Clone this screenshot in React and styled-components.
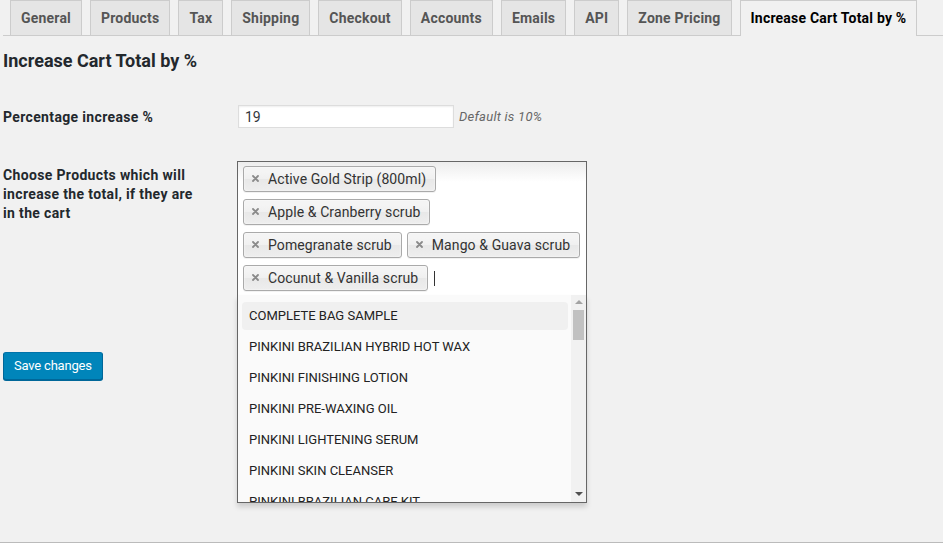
import React from "react";
import styled, { createGlobalStyle } from "styled-components";

const GlobalStyle = createGlobalStyle`
  html, body { margin: 0; padding: 0; }
  body {
    background: #f1f1f1;
    font-family: Roboto, "Liberation Sans", Arial, sans-serif;
    color: #23282d;
    font-size: 13px;
  }
  * { box-sizing: border-box; }
`;

const Page = styled.div`
  min-height: 100vh;
  display: flex;
  flex-direction: column;
`;

const Wrap = styled.div`
  flex: 1;
  padding-left: 3px;
`;

const TabBar = styled.nav`
  display: flex;
  align-items: flex-end;
  gap: 8px;
  padding-left: 7px;
  border-bottom: 1px solid #ccc;
`;

const Tab = styled.a`
  display: block;
  padding: 5px 10px;
  line-height: 24px;
  font-size: 14px;
  font-weight: 700;
  letter-spacing: 0.2px;
  white-space: nowrap;
  border: 1px solid #ccc;
  border-bottom: none;
  background: ${(p) => (p.$active ? "#f1f1f1" : "#e5e5e5")};
  color: ${(p) => (p.$active ? "#000" : "#555")};
  margin-bottom: ${(p) => (p.$active ? "-1px" : "0")};
  padding-bottom: ${(p) => (p.$active ? "6px" : "5px")};
  text-decoration: none;
`;

const Title = styled.h2`
  margin: 13px 0 0;
  font-size: 18px;
  line-height: 23px;
  font-weight: 700;
  color: #23282d;
`;

const FormTable = styled.div`
  display: flex;
  flex-direction: column;
  gap: 33px;
  margin-top: 33px;
`;

const FieldRow = styled.div`
  display: grid;
  grid-template-columns: 235px 1fr;
  align-items: ${(p) => (p.$top ? "start" : "center")};
`;

const Label = styled.label`
  width: 204px;
  font-size: 14px;
  font-weight: 700;
  letter-spacing: 0.35px;
  line-height: 19px;
  color: #23282d;
  padding-top: ${(p) => (p.$top ? "5px" : "1px")};
`;

const InputLine = styled.div`
  display: flex;
  align-items: center;
`;

const TextInput = styled.input`
  width: 216px;
  height: 23px;
  padding: 0 6px;
  border: 1px solid #ddd;
  box-shadow: inset 0 1px 2px rgba(0, 0, 0, 0.07);
  background: #fff;
  font-family: inherit;
  font-size: 14px;
  color: #32373c;
  outline: none;
`;

const Description = styled.span`
  margin-left: 5px;
  font-size: 13px;
  font-style: italic;
  letter-spacing: 0.25px;
  color: #666;
`;

const Select = styled.div`
  position: relative;
  width: 350px;
  margin-left: -1px;
`;

const Choices = styled.div`
  display: flex;
  flex-wrap: wrap;
  align-items: center;
  gap: 7px 5px;
  padding: 4px 5px 4px;
  border: 1px solid #666;
  border-bottom: none;
  background: linear-gradient(#eee 1%, #fff 15%);
`;

const Chip = styled.span`
  display: inline-flex;
  align-items: center;
  height: 26px;
  padding: 0 9px 1px 8px;
  border: 1px solid #aaa;
  border-radius: 3px;
  background: linear-gradient(#f4f4f4 20%, #f0f0f0 50%, #e8e8e8 52%, #eee 100%);
  box-shadow: inset 0 0 2px #fff, 0 1px 0 rgba(0, 0, 0, 0.05);
  font-size: 14px;
  letter-spacing: 0.1px;
  line-height: 24px;
  color: #333;
  white-space: nowrap;
`;

const Remove = styled.svg`
  width: 7px;
  height: 7px;
  margin-right: 9px;
  flex: none;
`;

const Caret = styled.span`
  width: 1px;
  height: 15px;
  margin-left: 1px;
  background: #333;
`;

const Dropdown = styled.div`
  position: absolute;
  top: 100%;
  left: 0;
  right: 0;
  height: 208px;
  display: flex;
  border: 1px solid #666;
  border-top: none;
  background: #fafafa;
  box-shadow: 0 4px 5px rgba(0, 0, 0, 0.15);
`;

const Results = styled.ul`
  flex: 1;
  margin: 0;
  padding: 7px 3px 0 4px;
  list-style: none;
  overflow: hidden;
`;

const Result = styled.li`
  height: 28px;
  margin-bottom: 3px;
  padding: 0 7px;
  line-height: 28px;
  font-size: 13px;
  color: #222;
  border-radius: 4px;
  white-space: nowrap;
  background: ${(p) => (p.$highlight ? "#f0f0f0" : "transparent")};
`;

const ScrollTrack = styled.div`
  width: 15px;
  flex: none;
  display: flex;
  flex-direction: column;
  align-items: center;
  padding: 5px 0 6px;
  background: #f1f1f1;
`;

const Arrow = styled.span`
  width: 0;
  height: 0;
  border-left: 4px solid transparent;
  border-right: 4px solid transparent;
  ${(p) =>
    p.$down
      ? "border-top: 4px solid #505050; margin-top: auto;"
      : "border-bottom: 4px solid #a3a3a3;"}
`;

const Thumb = styled.span`
  width: 11px;
  height: 30px;
  margin-top: 6px;
  background: #c1c1c1;
`;

const Submit = styled.p`
  margin: 57px 0 0;
`;

const PrimaryButton = styled.button`
  height: 28px;
  padding: 0 10px;
  border: 1px solid #006799;
  border-top-color: #0073aa;
  border-radius: 3px;
  background: #0085ba;
  box-shadow: 0 1px 0 #006799;
  color: #fff;
  font-family: inherit;
  font-size: 13px;
  letter-spacing: -0.2px;
  line-height: 26px;
  cursor: pointer;
`;

const Footer = styled.div`
  height: 2px;
  border-bottom: 1px solid #bbb;
`;

const tabs = [
  "General",
  "Products",
  "Tax",
  "Shipping",
  "Checkout",
  "Accounts",
  "Emails",
  "API",
  "Zone Pricing",
  "Increase Cart Total by %",
];

const chosen = [
  "Active Gold Strip (800ml)",
  "Apple & Cranberry scrub",
  "Pomegranate scrub",
  "Mango & Guava scrub",
  "Cocunut & Vanilla scrub",
];

const products = [
  "COMPLETE BAG SAMPLE",
  "PINKINI BRAZILIAN HYBRID HOT WAX",
  "PINKINI FINISHING LOTION",
  "PINKINI PRE-WAXING OIL",
  "PINKINI LIGHTENING SERUM",
  "PINKINI SKIN CLEANSER",
  "PINKINI BRAZILIAN CARE KIT",
];

function RemoveIcon() {
  return (
    <Remove viewBox="0 0 7 7">
      <path d="M1 1 L6 6 M6 1 L1 6" stroke="#8a8a8a" strokeWidth="1.8" strokeLinecap="round" />
    </Remove>
  );
}

export default function App() {
  return (
    <Page>
      <GlobalStyle />
      <Wrap>
        <TabBar>
          {tabs.map((t, i) => (
            <Tab key={t} $active={i === tabs.length - 1}>
              {t}
            </Tab>
          ))}
        </TabBar>
        <Title>Increase Cart Total by %</Title>
        <FormTable>
          <FieldRow>
            <Label>Percentage increase %</Label>
            <InputLine>
              <TextInput defaultValue="19" />
              <Description>Default is 10%</Description>
            </InputLine>
          </FieldRow>
          <FieldRow $top>
            <Label $top>Choose Products which will increase the total, if they are in the cart</Label>
            <Select>
              <Choices>
                {chosen.map((c) => (
                  <Chip key={c}>
                    <RemoveIcon />
                    {c}
                  </Chip>
                ))}
                <Caret />
              </Choices>
              <Dropdown>
                <Results>
                  {products.map((p, i) => (
                    <Result key={p} $highlight={i === 0}>
                      {p}
                    </Result>
                  ))}
                </Results>
                <ScrollTrack>
                  <Arrow />
                  <Thumb />
                  <Arrow $down />
                </ScrollTrack>
              </Dropdown>
            </Select>
          </FieldRow>
        </FormTable>
        <Submit>
          <PrimaryButton>Save changes</PrimaryButton>
        </Submit>
      </Wrap>
      <Footer />
    </Page>
  );
}
